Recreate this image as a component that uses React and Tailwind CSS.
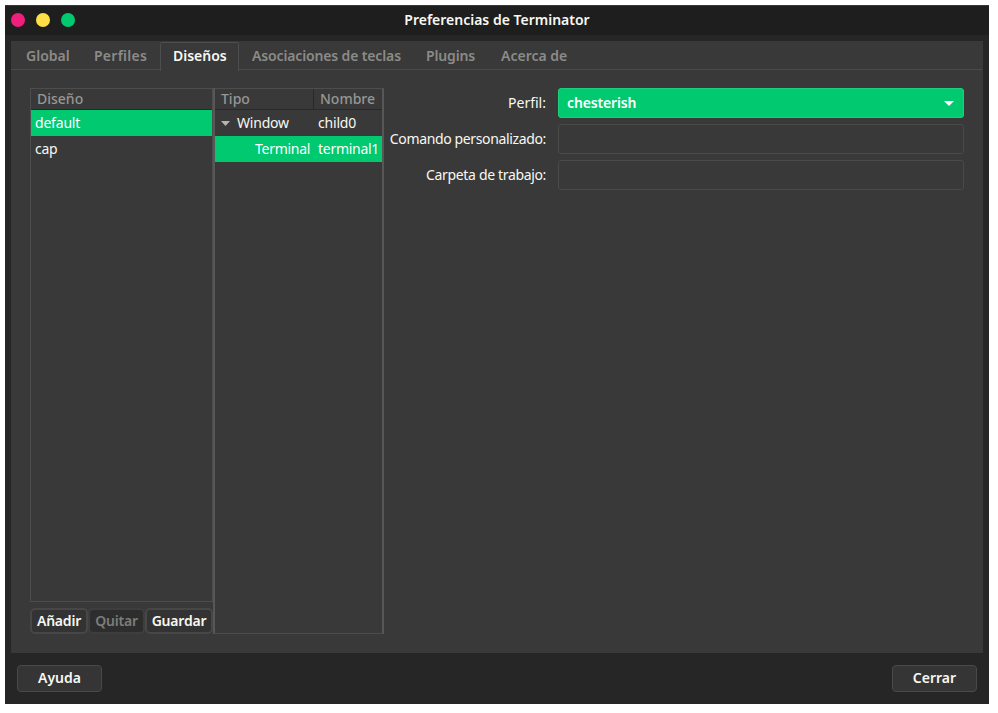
const TABS = [
  { label: "Global", pad: "w-[69px] pl-[15px]" },
  { label: "Perfiles", pad: "w-[80px] pl-[14px] tracking-[0.25px]" },
  { label: "Diseños", active: true, pad: "w-[79px] pl-3" },
  { label: "Asociaciones de teclas", pad: "w-[174px] pl-[13px] tracking-[-0.14px]" },
  { label: "Plugins", pad: "w-[75px] pl-[13px] tracking-[-0.15px]" },
  { label: "Acerca de", pad: "w-[100px] pl-[13px]" },
];

function Tab({ label, active, pad }) {
  return (
    <div
      className={`${pad} shrink-0 text-[14px] leading-5 font-semibold ${
        active
          ? "h-[29px] rounded-t-[2px] border border-b-0 border-[#4d4d4d] bg-[#393939] pt-[3px] text-[#f8f8f2]"
          : "h-[28px] border-b border-[#4a4a4a] pt-[4px] text-[#8b8b88]"
      }`}
    >
      {label}
    </div>
  );
}

function Field({ label, tracking = "", children }) {
  return (
    <div className="flex h-[30px] items-center">
      <div className={`${tracking} w-[162px] shrink-0 text-right text-[14px] leading-[30px]`}>{label}</div>
      <div className="ml-3 h-[30px] w-[406px]">{children}</div>
    </div>
  );
}

export default function App() {
  return (
    <div className="h-[713px] w-[998px] overflow-hidden bg-white pt-[5px] pl-[5px] font-['Noto_Sans',sans-serif] text-[14px] whitespace-nowrap text-[#f8f8f2]">
      <div className="flex h-[699px] w-[984px] flex-col bg-[#262626]">
        <header className="grid h-[30px] shrink-0 grid-cols-[1fr_auto_1fr] items-center border-t border-[#373737] bg-[#1e1e1e]">
          <div className="flex gap-[11px] pb-px pl-[6px]">
            <i className="size-[14px] rounded-full bg-[#f01e7c]" />
            <i className="size-[14px] rounded-full bg-[#ffdf47]" />
            <i className="size-[14px] rounded-full bg-[#00c970]" />
          </div>
          <h1 className="pb-[2px] text-[14px] font-semibold">Preferencias de Terminator</h1>
          <div />
        </header>

        <main className="mx-[6px] mt-[6px] h-[612px] shrink-0 bg-[#393939]">
          <nav className="flex h-[30px] pt-px">
            {TABS.map((t) => (
              <Tab key={t.label} {...t} />
            ))}
            <div className="mr-px h-[28px] flex-1 border-b border-[#4a4a4a]" />
          </nav>

          <div className="flex pt-[17px] pl-[19px]">
            <section className="w-[183px] shrink-0">
              <div className="h-[514px] border border-[#4d4d4d]">
                <div className="h-[21px] border-b border-[#292929] pl-[6px] text-[14px] leading-[19px] font-medium text-[#969694]">
                  Diseño
                </div>
                <div className="h-[26px] bg-[#00c970] pl-1 leading-[26px] tracking-[-0.2px] text-white">default</div>
                <div className="h-[26px] pl-1 leading-[26px] tracking-[-0.3px]">cap</div>
              </div>
              <div className="mt-[6px] flex h-[26px] text-[14px] leading-[21px] font-semibold tracking-[-0.2px]">
                <button className="flex w-[58px] justify-center rounded-[5px] border-2 border-[#474747] bg-[#333]">Añadir</button>
                <button className="flex w-[57px] justify-center rounded-[5px] border-2 border-[#3e3e3e] bg-[#2d2d2d] text-[#7d7d7a]">Quitar</button>
                <button className="flex w-[68px] justify-center rounded-[5px] border-2 border-[#474747] bg-[#333]">Guardar</button>
              </div>
            </section>

            <section className="h-[546px] w-[171px] shrink-0 border-x-2 border-y border-t-[#4d4d4d] border-b-[#4d4d4d] border-x-[#575757]">
              <div className="flex h-[21px] border-b border-[#292929] text-[14px] leading-[19px] font-medium text-[#969694]">
                <div className="w-[99px] border-r border-[#292929] pl-[6px]">Tipo</div>
                <div className="pl-[6px]">Nombre</div>
              </div>
              <div className="flex h-[26px] leading-[26px] tracking-[-0.2px]">
                <div className="flex w-[103px] items-center pl-[6px]">
                  <svg className="mr-[7px] h-[5px] w-[9px]" viewBox="0 0 9 5">
                    <path d="M0 0h9L4.5 5z" fill="#b5b5b0" />
                  </svg>
                  Window
                </div>
                child0
              </div>
              <div className="flex h-[26px] bg-[#00c970] leading-[26px] tracking-[-0.28px] text-white">
                <div className="w-[103px] pl-10">Terminal</div>
                terminal1
              </div>
            </section>

            <section className="flex flex-col gap-[6px]">
              <Field label="Perfil:">
                <div className="flex h-full items-center justify-between rounded-[3px] border border-[#1dd07e] bg-[#00c970] pr-[9px] pl-2 text-[14px] font-semibold tracking-[-0.15px] text-white">
                  <span className="pb-[2px]">chesterish</span>
                  <svg className="h-[5px] w-[10px]" viewBox="0 0 10 5">
                    <path d="M0 0h10L5 5z" fill="#fff" />
                  </svg>
                </div>
              </Field>
              <Field label="Comando personalizado:" tracking="tracking-[-0.36px]">
                <input className="block h-full w-full rounded-[3px] border border-[#4a4a4a] bg-[#393939]" />
              </Field>
              <Field label="Carpeta de trabajo:" tracking="tracking-[-0.34px]">
                <input className="block h-full w-full rounded-[3px] border border-[#4a4a4a] bg-[#393939]" />
              </Field>
            </section>
          </div>
        </main>

        <footer className="flex justify-between px-3 pt-3 text-[14px] leading-[24px] font-semibold">
          <button className="h-[27px] w-[85px] rounded-[4px] border border-[#494949] bg-[#353535] pb-px">Ayuda</button>
          <button className="h-[27px] w-[85px] rounded-[4px] border border-[#494949] bg-[#353535] pb-px">Cerrar</button>
        </footer>
      </div>
    </div>
  );
}
